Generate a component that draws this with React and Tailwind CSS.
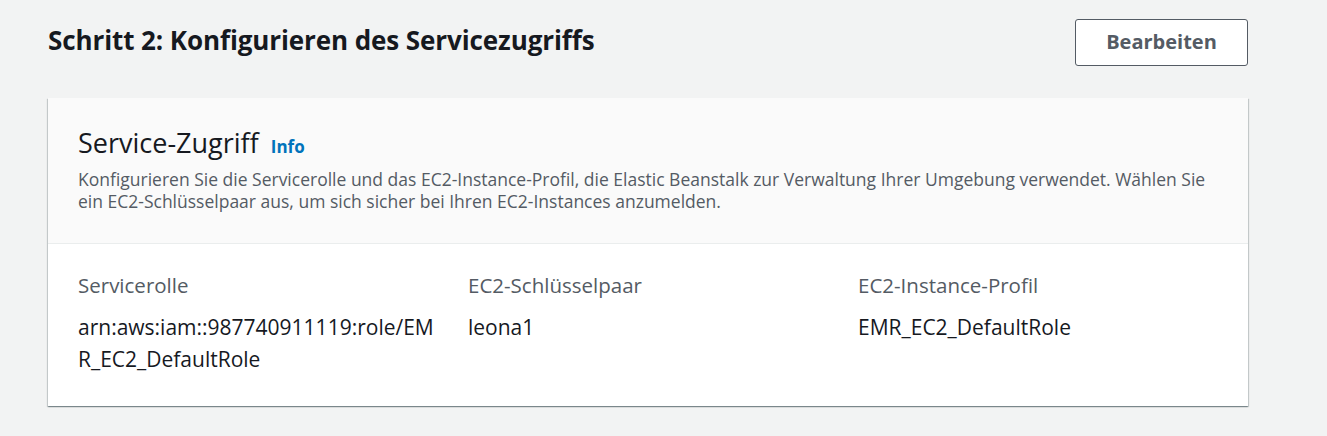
import React from "react";

export default function App() {
  const font = { fontFamily: '"Open Sans", "Noto Sans", sans-serif' };
  return (
    <div className="min-h-[436px] w-full bg-[#f2f3f3]" style={font}>
      <div className="ml-[48px] w-[1200px] pt-[19px]">
        <div className="flex items-start justify-between">
          <h2 className="mt-[6px] text-[26px] font-bold leading-[30px] text-[#16191f] tracking-[-0.1px]">
            Schritt 2: Konfigurieren des Servicezugriffs
          </h2>
          <button className="h-[47px] w-[173px] rounded-[3px] border border-[#545b64] bg-white pb-[1px] text-[20px] font-bold text-[#545b64]">
            Bearbeiten
          </button>
        </div>
        <div className="mt-[32px] bg-white shadow-[0_1px_1px_0_rgba(0,28,36,0.3),1px_1px_1px_0_rgba(0,28,36,0.15),-1px_1px_1px_0_rgba(0,28,36,0.15)]">
          <div className="border-b border-[#eaeded] bg-[#fafafa] px-[30px] pb-[31px] pt-[28px]">
            <div className="flex items-baseline gap-[12px]">
              <span className="text-[27px] leading-[34px] text-[#16191f]">Service-Zugriff</span>
              <span className="text-[17px] font-bold text-[#0073bb]">Info</span>
            </div>
            <p className="mt-[8px] text-[17.5px] leading-[22px] text-[#545b64]">
              Konfigurieren Sie die Servicerolle und das EC2-Instance-Profil, die Elastic Beanstalk zur Verwaltung Ihrer Umgebung verwendet. Wählen Sie ein EC2-Schlüsselpaar aus, um sich sicher bei Ihren EC2-Instances anzumelden.
            </p>
          </div>
          <div className="grid grid-cols-3 gap-[30px] px-[30px] pb-[31px] pt-[27px]">
            {[
              ["Servicerolle", "arn:aws:iam::987740911119:role/EMR_EC2_DefaultRole"],
              ["EC2-Schlüsselpaar", "leona1"],
              ["EC2-Instance-Profil", "EMR_EC2_DefaultRole"],
            ].map(([label, value]) => (
              <div key={label}>
                <div className="text-[20.5px] leading-[28px] text-[#545b64]">{label}</div>
                <div className="mt-[12px] break-all text-[21px] leading-[32px] text-[#16191f]">{value}</div>
              </div>
            ))}
          </div>
        </div>
      </div>
    </div>
  );
}
